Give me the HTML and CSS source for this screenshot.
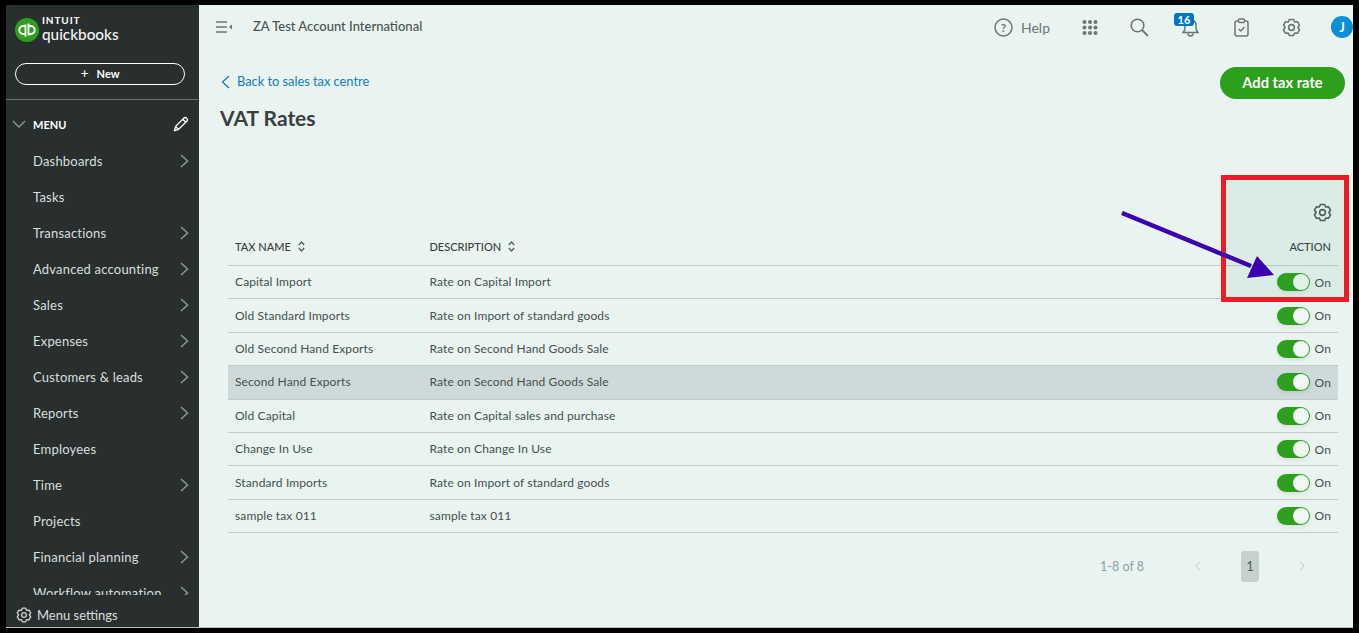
FILE: index.html
```html
<!DOCTYPE html>
<html lang="en">
<head>
<meta charset="utf-8">
<title>VAT Rates</title>
<link rel="stylesheet" href="styles.css">
</head>
<body>
<div class="frame">
  <aside class="sidebar">
    <div class="brand">
      <svg class="brand-mark" width="30" height="30" viewBox="0 0 30 30"><circle cx="15" cy="15" r="12" fill="#2ca01c"/><path d="M13.500 9.500v12M16.500 20.500v-12M13.500 11h-2.200a4 4 0 0 0 0 8h1.200M16.500 19h2.200a4 4 0 0 0 0-8h-1.200" fill="none" stroke="#fff" stroke-width="1.900"/></svg>
      <div class="brand-text"><span class="brand-intuit">INTUIT</span><span class="brand-qb">quickbooks</span></div>
    </div>
    <div class="new-wrap"><button class="new-btn"><span class="new-plus">+</span>New</button></div>
    <div class="menu-head">
      <svg width="14" height="8" viewBox="0 0 14 8"><path d="M1 1l6 6 6-6" fill="none" stroke="#8d9896" stroke-width="1.400"/></svg>
      <span class="menu-label">MENU</span>
      <svg class="menu-pencil" width="16" height="16" viewBox="0 0 16 16"><path d="M1.500 14.500l1-4L11 2a1.600 1.600 0 0 1 2.300 0l.7.7a1.600 1.600 0 0 1 0 2.300l-8.500 8.500zM9.800 3.200l3 3M2.500 10.500l3 3" fill="none" stroke="#fff" stroke-width="1.300"/></svg>
    </div>
    <nav class="nav">
      <a class="nav-item">Dashboards<svg class="chev" width="9" height="14" viewBox="0 0 9 14"><path d="M1 1l6.500 6L1 13" fill="none" stroke="#8d9896" stroke-width="1.500"/></svg></a>
      <a class="nav-item">Tasks</a>
      <a class="nav-item">Transactions<svg class="chev" width="9" height="14" viewBox="0 0 9 14"><path d="M1 1l6.500 6L1 13" fill="none" stroke="#8d9896" stroke-width="1.500"/></svg></a>
      <a class="nav-item">Advanced accounting<svg class="chev" width="9" height="14" viewBox="0 0 9 14"><path d="M1 1l6.500 6L1 13" fill="none" stroke="#8d9896" stroke-width="1.500"/></svg></a>
      <a class="nav-item">Sales<svg class="chev" width="9" height="14" viewBox="0 0 9 14"><path d="M1 1l6.500 6L1 13" fill="none" stroke="#8d9896" stroke-width="1.500"/></svg></a>
      <a class="nav-item">Expenses<svg class="chev" width="9" height="14" viewBox="0 0 9 14"><path d="M1 1l6.500 6L1 13" fill="none" stroke="#8d9896" stroke-width="1.500"/></svg></a>
      <a class="nav-item">Customers &amp; leads<svg class="chev" width="9" height="14" viewBox="0 0 9 14"><path d="M1 1l6.500 6L1 13" fill="none" stroke="#8d9896" stroke-width="1.500"/></svg></a>
      <a class="nav-item">Reports<svg class="chev" width="9" height="14" viewBox="0 0 9 14"><path d="M1 1l6.500 6L1 13" fill="none" stroke="#8d9896" stroke-width="1.500"/></svg></a>
      <a class="nav-item">Employees</a>
      <a class="nav-item">Time<svg class="chev" width="9" height="14" viewBox="0 0 9 14"><path d="M1 1l6.500 6L1 13" fill="none" stroke="#8d9896" stroke-width="1.500"/></svg></a>
      <a class="nav-item">Projects</a>
      <a class="nav-item">Financial planning<svg class="chev" width="9" height="14" viewBox="0 0 9 14"><path d="M1 1l6.500 6L1 13" fill="none" stroke="#8d9896" stroke-width="1.500"/></svg></a>
      <a class="nav-item">Workflow automation<svg class="chev" width="9" height="14" viewBox="0 0 9 14"><path d="M1 1l6.500 6L1 13" fill="none" stroke="#8d9896" stroke-width="1.500"/></svg></a>
    </nav>
    <div class="menu-settings">
      <svg width="16" height="16" viewBox="0 0 24 24"><path d="M9.460 1.810H14.540L16 5.070 19.550 4.700 22.090 9.100 20 12 22.090 14.900 19.550 19.300 16 18.930 14.540 22.190H9.460L8 18.930 4.450 19.300 1.910 14.900 4 12 1.910 9.100 4.450 4.700 8 5.070Z" fill="none" stroke="#c9d0ce" stroke-width="2" stroke-linejoin="round"/><circle cx="12" cy="12" r="3.500" fill="none" stroke="#c9d0ce" stroke-width="2"/></svg>
      <span>Menu settings</span>
    </div>
  </aside>
  <main class="main">
    <header class="topbar">
      <svg class="collapse" width="17" height="12" viewBox="0 0 17 12"><path d="M0 1h11M0 6h11M0 11h11" stroke="#6b7775" stroke-width="1.600"/><path d="M16 3.500v5L13 6z" fill="#6b7775"/></svg>
      <span class="company">ZA Test Account International</span>
      <div class="top-actions">
        <div class="help">
          <svg width="19" height="19" viewBox="0 0 19 19"><circle cx="9.500" cy="9.500" r="8.500" fill="none" stroke="#6b7775" stroke-width="1.500"/><text x="9.500" y="14" text-anchor="middle" class="help-q">?</text></svg>
          <span>Help</span>
        </div>
        <svg class="act-grid" width="16" height="15" viewBox="0 0 16 15" fill="#6b7775"><circle cx="2.500" cy="2" r="2"/><circle cx="8" cy="2" r="2"/><circle cx="13.500" cy="2" r="2"/><circle cx="2.500" cy="7.500" r="2"/><circle cx="8" cy="7.500" r="2"/><circle cx="13.500" cy="7.500" r="2"/><circle cx="2.500" cy="13" r="2"/><circle cx="8" cy="13" r="2"/><circle cx="13.500" cy="13" r="2"/></svg>
        <svg class="act-search" width="19" height="19" viewBox="0 0 19 19"><circle cx="7.500" cy="7.500" r="6.300" fill="none" stroke="#6b7775" stroke-width="1.600"/><path d="M12 12l6 6" stroke="#6b7775" stroke-width="1.800"/></svg>
        <div class="bell">
          <svg width="17" height="19" viewBox="0 0 17 19"><path d="M1 14.500c1.500-1.200 2-2.500 2-5V7a5.500 5.500 0 0 1 11 0v2.500c0 2.500.5 3.800 2 5zM6 15.500a2.500 2.500 0 0 0 5 0" fill="none" stroke="#6b7775" stroke-width="1.500"/></svg>
          <span class="badge">16</span>
        </div>
        <svg class="act-clip" width="15" height="19" viewBox="0 0 15 19"><rect x="1" y="3" width="13" height="15" rx="2" fill="none" stroke="#6b7775" stroke-width="1.500"/><rect x="4.500" y="1" width="6" height="3.500" rx="1" fill="#e9f3f0" stroke="#6b7775" stroke-width="1.300"/><path d="M4.800 11l2 2 3.500-4" fill="none" stroke="#6b7775" stroke-width="1.400"/></svg>
        <svg class="act-gear" width="19" height="19" viewBox="0 0 24 24"><path d="M9.460 1.810H14.540L16 5.070 19.550 4.700 22.090 9.100 20 12 22.090 14.900 19.550 19.300 16 18.930 14.540 22.190H9.460L8 18.930 4.450 19.300 1.910 14.900 4 12 1.910 9.100 4.450 4.700 8 5.070Z" fill="none" stroke="#6b7775" stroke-width="2" stroke-linejoin="round"/><circle cx="12" cy="12" r="3.600" fill="none" stroke="#6b7775" stroke-width="2"/></svg>
        <span class="avatar">J</span>
      </div>
    </header>
    <section class="page">
      <div class="page-head">
        <div>
          <a class="back"><svg width="9" height="14" viewBox="0 0 9 14"><path d="M8 1L1.500 7 8 13" fill="none" stroke="#0d7fc1" stroke-width="1.300"/></svg>Back to sales tax centre</a>
          <h1 class="title">VAT Rates</h1>
        </div>
        <button class="add-btn">Add tax rate</button>
      </div>
      <div class="table">
        <div class="gear-row">
          <svg width="19" height="19" viewBox="0 0 24 24"><path d="M9.460 1.810H14.540L16 5.070 19.550 4.700 22.090 9.100 20 12 22.090 14.900 19.550 19.300 16 18.930 14.540 22.190H9.460L8 18.930 4.450 19.300 1.910 14.900 4 12 1.910 9.100 4.450 4.700 8 5.070Z" fill="none" stroke="#4f5b59" stroke-width="2" stroke-linejoin="round"/><circle cx="12" cy="12" r="3.600" fill="none" stroke="#4f5b59" stroke-width="2"/></svg>
        </div>
        <div class="row head-row">
          <span class="c-name">TAX NAME <svg class="sort" width="7" height="11" viewBox="0 0 7 11"><path d="M.8 4l2.700-3 2.700 3M.8 7l2.700 3 2.700-3" fill="none" stroke="#4f5b59" stroke-width="1.200"/></svg></span>
          <span class="c-desc">DESCRIPTION <svg class="sort" width="7" height="11" viewBox="0 0 7 11"><path d="M.8 4l2.700-3 2.700 3M.8 7l2.700 3 2.700-3" fill="none" stroke="#4f5b59" stroke-width="1.200"/></svg></span>
          <span class="c-action">ACTION</span>
        </div>
        <div class="row"><span class="c-name">Capital Import</span><span class="c-desc">Rate on Capital Import</span><span class="c-action"><i class="toggle"></i>On</span></div>
        <div class="row"><span class="c-name">Old Standard Imports</span><span class="c-desc">Rate on Import of standard goods</span><span class="c-action"><i class="toggle"></i>On</span></div>
        <div class="row"><span class="c-name">Old Second Hand Exports</span><span class="c-desc">Rate on Second Hand Goods Sale</span><span class="c-action"><i class="toggle"></i>On</span></div>
        <div class="row hovered"><span class="c-name">Second Hand Exports</span><span class="c-desc">Rate on Second Hand Goods Sale</span><span class="c-action"><i class="toggle"></i>On</span></div>
        <div class="row"><span class="c-name">Old Capital</span><span class="c-desc">Rate on Capital sales and purchase</span><span class="c-action"><i class="toggle"></i>On</span></div>
        <div class="row"><span class="c-name">Change In Use</span><span class="c-desc">Rate on Change In Use</span><span class="c-action"><i class="toggle"></i>On</span></div>
        <div class="row"><span class="c-name">Standard Imports</span><span class="c-desc">Rate on Import of standard goods</span><span class="c-action"><i class="toggle"></i>On</span></div>
        <div class="row"><span class="c-name">sample tax 011</span><span class="c-desc">sample tax 011</span><span class="c-action"><i class="toggle"></i>On</span></div>
      </div>
      <div class="pager">
        <span class="pager-count">1-8 of 8</span>
        <svg class="pager-prev" width="6" height="10" viewBox="0 0 6 10"><path d="M5 1L1 5l4 4" fill="none" stroke="#cfd8d6" stroke-width="1.200"/></svg>
        <span class="pager-page">1</span>
        <svg class="pager-next" width="6" height="10" viewBox="0 0 6 10"><path d="M1 1l4 4-4 4" fill="none" stroke="#cfd8d6" stroke-width="1.200"/></svg>
      </div>
    </section>
    <div class="highlight"></div>
    <svg class="arrow" width="170" height="90" viewBox="0 0 170 90"><path d="M1 2L130 55" stroke="#3d00b0" stroke-width="4.500" fill="none"/><path d="M153 64L126 67 136 45z" fill="#3d00b0"/></svg>
  </main>
</div>
</body>
</html>
```
FILE: styles.css
```css
* { box-sizing: border-box; }
html, body { margin: 0; height: 100%; overflow: hidden; }
body { background: #000; font-family: Lato, "Open Sans", sans-serif; color: #393f3e; }
.frame { display: flex; width: 1347px; height: 623px; margin: 5px 0 0 6px; border-bottom: 1px solid #b7bdbc; }

.sidebar { width: 193px; flex: none; background: #282f2e; color: #dfe4e2; display: flex; flex-direction: column; overflow: hidden; }
.brand { display: flex; align-items: center; gap: 0; height: 44px; padding: 6px 0 0 6px; }
.brand-text { display: flex; flex-direction: column; color: #fff; line-height: 1; margin-top: -2px; }
.brand-intuit { font-size: 10px; font-weight: 700; letter-spacing: .9px; height: 9px; line-height: 9px; margin-bottom: 2px; }
.brand-qb { font-size: 15.300px; font-weight: 500; color: #f1f4f3; }
.new-wrap { height: 51px; padding-top: 14px; border-bottom: 1px solid #6a7371; flex: none; }
.new-btn { display: block; width: 170px; height: 22px; margin-left: 9px; border: 1px solid #fff; border-radius: 11px; background: transparent; color: #fff; font: 700 11px Lato, sans-serif; padding: 0 0 4px; }
.new-plus { font-size: 14px; font-weight: 400; margin-right: 8px; }
.menu-head { display: flex; align-items: center; height: 50px; padding: 0 10px 2px 6px; flex: none; }
.menu-label { font-size: 11px; font-weight: 700; color: #fff; margin-left: 7px; }
.menu-pencil { margin-left: auto; }
.nav { flex: 1; min-height: 0; overflow: hidden; margin-top: -7px; }
.nav-item { display: flex; align-items: center; justify-content: space-between; height: 36px; padding: 0 10px 0 27px; font-size: 13px; letter-spacing: .2px; color: #d9dfdd; }
.menu-settings { flex: none; height: 32px; display: flex; align-items: center; gap: 5px; padding: 8px 0 0 10px; background: #282f2e; font-size: 13px; color: #d9dfdd; }

.main { position: relative; flex: 1; background: #e9f3f0; min-width: 0; }
.topbar { display: flex; align-items: center; height: 44px; padding: 0 12px 0 17px; }
.company { margin: -2px 0 0 20px; font-size: 13px; font-weight: 500; color: #4a5351; }
.top-actions { margin-left: auto; display: flex; align-items: center; }
.help { display: flex; align-items: center; gap: 8px; font-size: 14px; color: #6b7775; margin-right: 32px; }
.help-q { font: 700 12px Lato, sans-serif; fill: #6b7775; }
.act-grid { margin-right: 32px; }
.act-search { margin-right: 33px; }
.bell { position: relative; width: 17px; height: 19px; margin-right: 35px; }
.badge { position: absolute; left: -8px; top: -5px; width: 20px; height: 13px; border-radius: 3px; background: #0077c5; color: #fff; font-size: 11px; font-weight: 700; line-height: 13px; text-align: center; }
.act-clip { margin-right: 33px; }
.act-gear { margin-right: 30px; }
.avatar { width: 22px; height: 22px; border-radius: 50%; background: #0d8fd8; color: #fff; font-size: 13px; font-weight: 700; line-height: 22px; text-align: center; margin-right: -12px; }

.page { padding: 0 8px 0 21px; }
.page-head { display: flex; justify-content: space-between; align-items: flex-start; height: 119px; }
.back { display: flex; align-items: center; gap: 7px; margin: 25px 0 0 1px; font-size: 12.800px; color: #0d7fc1; line-height: 15px; }
.title { margin: 17px 0 0; font-size: 21px; font-weight: 700; color: #393f3e; line-height: 24px; }
.add-btn { margin: 18px 0 0; width: 125px; height: 32px; border: 0; border-radius: 16px; background: #2ca01c; color: #fff; font: 700 14.700px Lato, sans-serif; padding: 0 0 2px; }
.table { margin-left: 8px; width: 1110px; }
.gear-row { height: 63px; display: flex; justify-content: flex-end; align-items: flex-start; padding: 35px 6px 0 0; }
.row { display: flex; align-items: center; height: 33.400px; padding: 0 7px; border-bottom: 1px solid #bfcccb; font-size: 12px; color: #45504e; letter-spacing: .12px; }
.head-row { height: 35px; padding-bottom: 3px; font-weight: 500; color: #393f3e; font-size: 11px; letter-spacing: 0; }
.hovered { background: #cedad9; }
.c-name { width: 194.500px; flex: none; margin-bottom: 1px; }
.c-desc { flex: 1; margin-bottom: 1px; }
.c-action { display: flex; align-items: center; gap: 5px; }
.sort { margin-left: 4px; vertical-align: -1px; }
.toggle { position: relative; display: block; width: 33px; height: 18px; border-radius: 9px; background: #2ca01c; box-shadow: 0 2px 4px rgba(0,0,0,.08); }
.toggle::after { content: ""; position: absolute; right: 1px; top: 1px; width: 16px; height: 16px; border-radius: 50%; background: #f1f7f4; }
.pager { display: flex; align-items: center; height: 32px; margin: 17px 0 0 8px; width: 1110px; justify-content: flex-end; font-size: 12.500px; color: #8aa0ab; }
.pager-count { margin-right: 51px; }
.pager-prev { margin-right: 40px; }
.pager-page { width: 18px; height: 31px; border-radius: 3px; background: #c5d0cf; color: #4f5b59; text-align: center; line-height: 31px; font-size: 13px; }
.pager-next { margin: 0 33px 0 40px; }

.highlight { position: absolute; left: 1022px; top: 170px; width: 128px; height: 127px; border: 5px solid #ed1c24; background: rgba(40,160,120,.08); }
.arrow { position: absolute; left: 922px; top: 206px; }
```
